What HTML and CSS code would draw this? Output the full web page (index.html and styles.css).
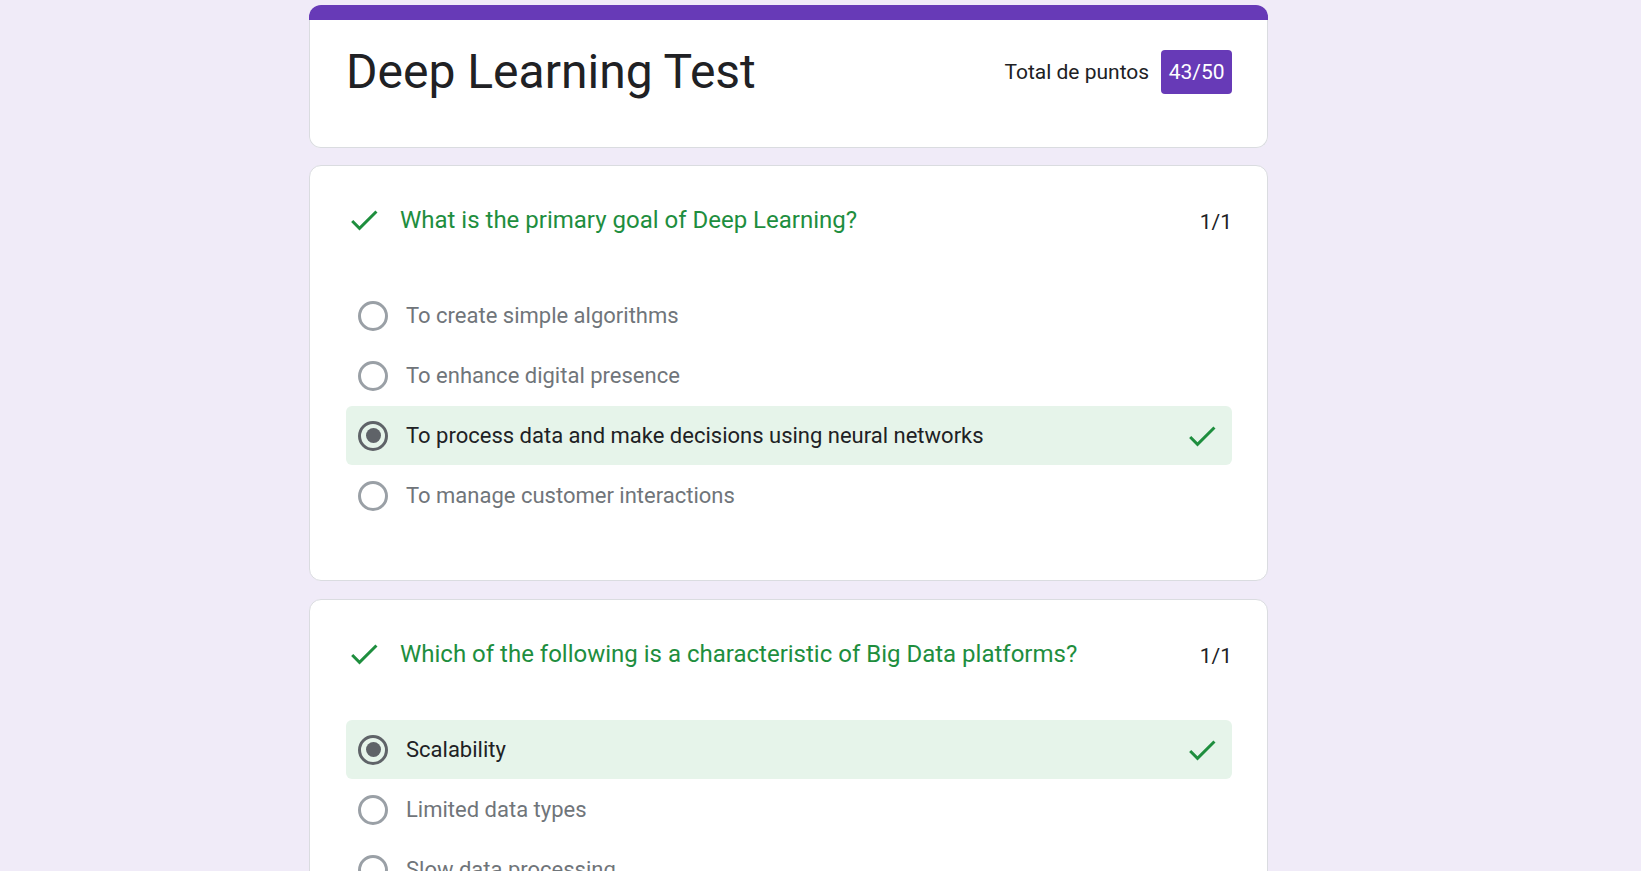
FILE: index.html
```html
<!DOCTYPE html>
<html lang="es">
<head>
<meta charset="utf-8">
<title>Deep Learning Test</title>
<link rel="stylesheet" href="styles.css">
</head>
<body>
<main class="form">
  <section class="header-card">
    <div class="header-bar"></div>
    <div class="header-body">
      <h1 class="form-title">Deep Learning Test</h1>
      <div class="score">
        <span class="score-label">Total de puntos</span>
        <span class="score-badge">43/50</span>
      </div>
    </div>
  </section>

  <section class="q-card">
    <div class="q-head">
      <svg class="icon-check" viewBox="0 0 24 24" width="36" height="36"><path d="M9 16.17L4.83 12l-1.42 1.41L9 19 21 7l-1.41-1.41z"/></svg>
      <h2 class="q-title">What is the primary goal of Deep Learning?</h2>
      <span class="q-points">1/1</span>
    </div>
    <ul class="options">
      <li class="option"><span class="radio"></span><span class="opt-text">To create simple algorithms</span></li>
      <li class="option"><span class="radio"></span><span class="opt-text">To enhance digital presence</span></li>
      <li class="option option-correct"><span class="radio radio-on"></span><span class="opt-text">To process data and make decisions using neural networks</span><svg class="icon-check" viewBox="0 0 24 24" width="36" height="36"><path d="M9 16.17L4.83 12l-1.42 1.41L9 19 21 7l-1.41-1.41z"/></svg></li>
      <li class="option"><span class="radio"></span><span class="opt-text">To manage customer interactions</span></li>
    </ul>
  </section>

  <section class="q-card">
    <div class="q-head">
      <svg class="icon-check" viewBox="0 0 24 24" width="36" height="36"><path d="M9 16.17L4.83 12l-1.42 1.41L9 19 21 7l-1.41-1.41z"/></svg>
      <h2 class="q-title">Which of the following is a characteristic of Big Data platforms?</h2>
      <span class="q-points">1/1</span>
    </div>
    <ul class="options">
      <li class="option option-correct"><span class="radio radio-on"></span><span class="opt-text">Scalability</span><svg class="icon-check" viewBox="0 0 24 24" width="36" height="36"><path d="M9 16.17L4.83 12l-1.42 1.41L9 19 21 7l-1.41-1.41z"/></svg></li>
      <li class="option"><span class="radio"></span><span class="opt-text">Limited data types</span></li>
      <li class="option"><span class="radio"></span><span class="opt-text">Slow data processing</span></li>
    </ul>
  </section>
</main>
</body>
</html>
```

FILE: styles.css
```css
* {
  box-sizing: border-box;
}

html, body {
  margin: 0;
  padding: 0;
}

body {
  background: #f0ebf8;
  font-family: Roboto, "Liberation Sans", Arial, sans-serif;
  color: #202124;
}

.form {
  width: 959px;
  margin-left: 309px;
  padding-top: 5px;
  display: flex;
  flex-direction: column;
}

/* header card */
.header-card {
  background: #ffffff;
  border-radius: 12px;
  margin-bottom: 17px;
}

.header-bar {
  height: 15px;
  background: #673ab7;
  border-radius: 12px 12px 0 0;
}

.header-body {
  border: 1px solid #dadce0;
  border-top: none;
  border-radius: 0 0 12px 12px;
  padding: 22px 35px 45px 36px;
  display: flex;
  align-items: center;
  justify-content: space-between;
}

.form-title {
  margin: 0;
  font-size: 48px;
  font-weight: 400;
  line-height: 60px;
  color: #202124;
}

.score {
  display: flex;
  align-items: center;
  gap: 12px;
}

.score-label {
  font-size: 21px;
  color: #202124;
}

.score-badge {
  background: #673ab7;
  color: #ffffff;
  font-size: 21px;
  line-height: 32px;
  padding: 6px 7.5px;
  border-radius: 4px;
}

/* question cards */
.q-card {
  background: #ffffff;
  border: 1px solid #dadce0;
  border-radius: 12px;
  padding: 36px 35px 35px 36px;
  margin-bottom: 18px;
}

.q-head {
  display: flex;
  align-items: flex-start;
}

.icon-check {
  flex: none;
  display: block;
  fill: #1e8e3e;
}

.q-title {
  flex: 1;
  margin: 0 0 0 18px;
  font-size: 24px;
  font-weight: 400;
  line-height: 36px;
  color: #1e8e3e;
}

.q-points {
  flex: none;
  font-size: 21px;
  line-height: 36px;
  padding-top: 2px;
  color: #202124;
}

.options {
  list-style: none;
  margin: 46px 0 19px 0;
  padding: 0;
}

.option {
  height: 60px;
  display: flex;
  align-items: center;
  padding: 0 12px;
  border-radius: 6px;
}

.option-correct {
  background: #e6f4ea;
  height: 59px;
  margin-bottom: 1px;
}

.radio {
  flex: none;
  width: 30px;
  height: 30px;
  border: 3px solid #9aa0a6;
  border-radius: 50%;
  display: flex;
  align-items: center;
  justify-content: center;
}

.radio-on {
  border-color: #5f6368;
}

.radio-on::after {
  content: "";
  width: 15px;
  height: 15px;
  border-radius: 50%;
  background: #5f6368;
}

.opt-text {
  flex: 1;
  margin-left: 18px;
  font-size: 22px;
  line-height: 30px;
  color: #70757a;
}

.option-correct .opt-text {
  color: #202124;
}
```
